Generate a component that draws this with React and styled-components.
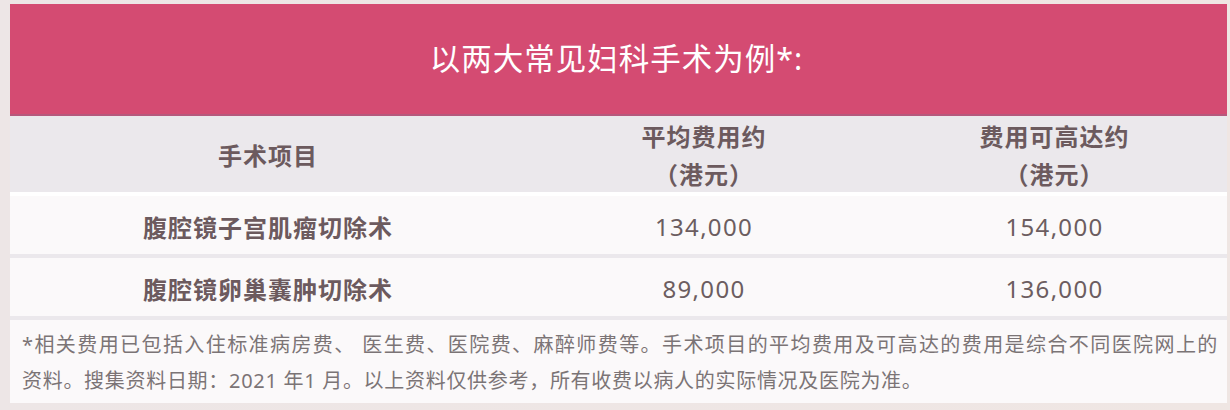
import React from 'react'
import styled, { createGlobalStyle } from 'styled-components'

const rows = [
  { name: '腹腔镜子宫肌瘤切除术', avg: '134,000', max: '154,000' },
  { name: '腹腔镜卵巢囊肿切除术', avg: '89,000', max: '136,000' },
]

const App = () => (
  <Page>
    <GlobalStyle />
    <Card>
      <Title>以两大常见妇科手术为例*:</Title>
      <HeadRow>
        <HeadCell>手术项目</HeadCell>
        <HeadCell>平均费用约<br />（港元）</HeadCell>
        <HeadCell>费用可高达约<br />（港元）</HeadCell>
      </HeadRow>
      {rows.map((row, i) => (
        <BodyRow key={row.name} $first={i === 0}>
          <NameCell>{row.name}</NameCell>
          <NumCell>{row.avg}</NumCell>
          <NumCell>{row.max}</NumCell>
        </BodyRow>
      ))}
      <Note>
        <NoteLine $justify>
          *相关费用已包括入住标准病房费、 医生费、医院费、麻醉师费等。手术项目的平均费用及可高达的费用是综合不同医院网上的
        </NoteLine>
        <NoteLine>
          资料。搜集资料日期：2021 年1 月。以上资料仅供参考，所有收费以病人的实际情况及医院为准。
        </NoteLine>
      </Note>
    </Card>
  </Page>
)

const GlobalStyle = createGlobalStyle`
  * {
    box-sizing: border-box;
  }
  html,
  body {
    margin: 0;
    padding: 0;
    background: #efe6e3;
    font-family: "Noto Sans", "Noto Sans CJK SC", sans-serif;
  }
`

const Page = styled.div`
  width: 1230px;
  height: 410px;
  padding: 4px 3px 0 10px;
  background: linear-gradient(90deg, #ede6e6 0%, #efe6e3 100%);
`

const Card = styled.div`
  width: 1217px;
  background: #ebe8ec;
  display: flex;
  flex-direction: column;
  gap: 4px;
`

const Title = styled.div`
  height: 112px;
  background: #d44b72;
  border-bottom: 2px solid #b6587c;
  box-shadow: 0 3px 0 #fdeaf6;
  display: flex;
  align-items: center;
  justify-content: center;
  padding: 0 4px 4px 0;
  color: #ffffff;
  font-size: 30.5px;
  letter-spacing: 1px;
  font-weight: 400;
`

const Grid = styled.div`
  display: grid;
  grid-template-columns: 516px 356px 345px;
  align-items: center;
`

const HeadRow = styled(Grid)`
  height: 76px;
  margin-top: -4px;
  padding-top: 2px;
  background: #ebe8ec;
`

const HeadCell = styled.div`
  text-align: center;
  color: #6c5a5e;
  font-size: 24px;
  line-height: 38px;
  letter-spacing: 1px;
  font-weight: 700;
`

const BodyRow = styled(Grid)`
  height: ${p => (p.$first ? '62px' : '58px')};
  margin-top: ${p => (p.$first ? '-4px' : '0')};
  background: #fbf9fa;
  border-top: ${p => (p.$first ? '4px solid #ffffff' : 'none')};
  padding-top: 2px;
`

const NameCell = styled.div`
  text-align: center;
  color: #6c5a5e;
  font-size: 24px;
  letter-spacing: 1px;
  font-weight: 700;
`

const NumCell = styled.div`
  text-align: center;
  color: #6c5d60;
  font-size: 24px;
  letter-spacing: 1.3px;
  font-weight: 400;
`

const Note = styled.div`
  height: 83px;
  background: #fbf9fa;
  padding: 7px 9px 0 12px;
  color: #7b7476;
  font-size: 20px;
  line-height: 36px;
  letter-spacing: 0.7px;
`

const NoteLine = styled.div`
  white-space: nowrap;
  text-align: ${p => (p.$justify ? 'justify' : 'left')};
  text-align-last: ${p => (p.$justify ? 'justify' : 'auto')};
`

export default App
